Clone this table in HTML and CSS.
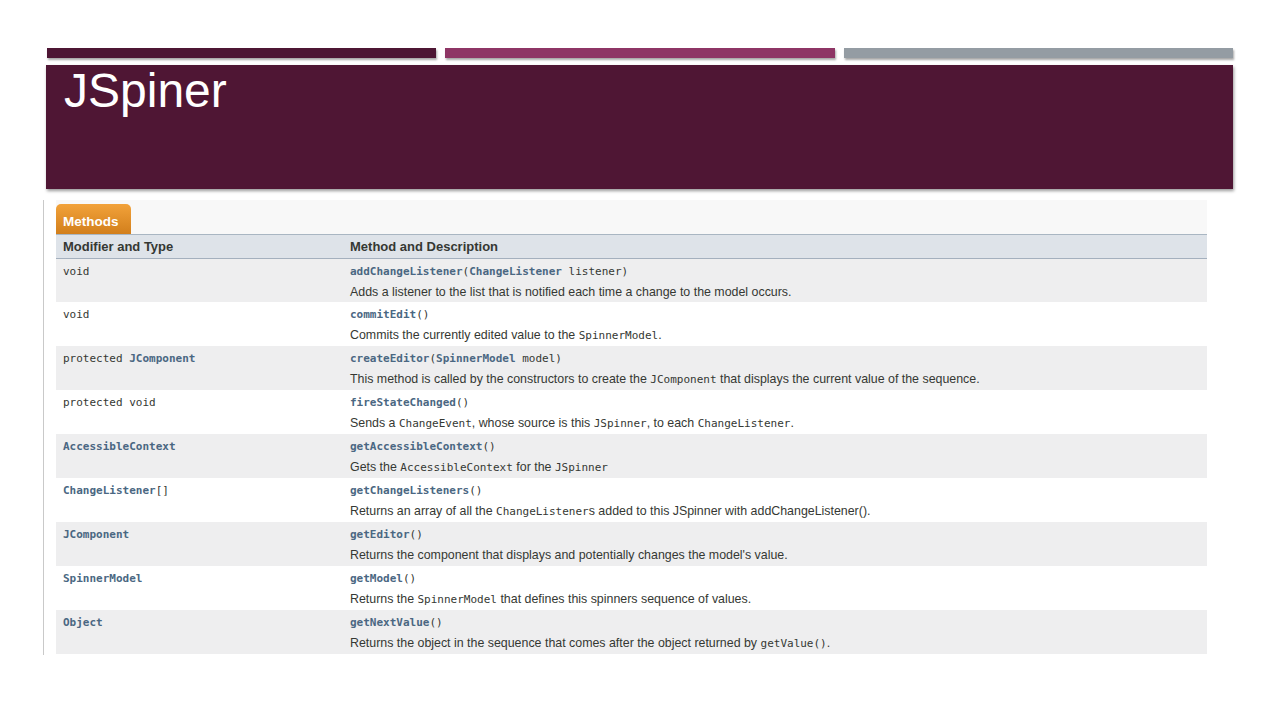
FILE: index.html
```html
<!DOCTYPE html>
<html>
<head>
<meta charset="utf-8">
<link rel="stylesheet" href="styles.css">
</head>
<body>
<div class="slide">
  <div class="bars">
    <div class="bar bar-dark"></div>
    <div class="bar bar-pink"></div>
    <div class="bar bar-gray"></div>
  </div>
  <div class="title-block">
    <h1 class="title">JSpiner</h1>
  </div>
  <div class="doc">
    <div class="tab-area">
      <div class="tab">Methods</div>
    </div>
    <div class="table">
      <div class="row head">
        <div class="cell">Modifier and Type</div>
        <div class="cell">Method and Description</div>
      </div>
      <div class="row alt">
        <div class="cell"><code>void</code></div>
        <div class="cell"><div class="sig"><code class="link">addChangeListener</code><code>(</code><code class="link">ChangeListener</code><code>&nbsp;listener)</code></div><div class="desc">Adds a listener to the list that is notified each time a change to the model occurs.</div></div>
      </div>
      <div class="row">
        <div class="cell"><code>void</code></div>
        <div class="cell"><div class="sig"><code class="link">commitEdit</code><code>()</code></div><div class="desc">Commits the currently edited value to the <code>SpinnerModel</code>.</div></div>
      </div>
      <div class="row alt">
        <div class="cell"><code>protected&nbsp;</code><code class="link">JComponent</code></div>
        <div class="cell"><div class="sig"><code class="link">createEditor</code><code>(</code><code class="link">SpinnerModel</code><code>&nbsp;model)</code></div><div class="desc">This method is called by the constructors to create the <code>JComponent</code> that displays the current value of the sequence.</div></div>
      </div>
      <div class="row">
        <div class="cell"><code>protected void</code></div>
        <div class="cell"><div class="sig"><code class="link">fireStateChanged</code><code>()</code></div><div class="desc">Sends a <code>ChangeEvent</code>, whose source is this <code>JSpinner</code>, to each <code>ChangeListener</code>.</div></div>
      </div>
      <div class="row alt">
        <div class="cell"><code class="link">AccessibleContext</code></div>
        <div class="cell"><div class="sig"><code class="link">getAccessibleContext</code><code>()</code></div><div class="desc">Gets the <code>AccessibleContext</code> for the <code>JSpinner</code></div></div>
      </div>
      <div class="row">
        <div class="cell"><code class="link">ChangeListener</code><code>[]</code></div>
        <div class="cell"><div class="sig"><code class="link">getChangeListeners</code><code>()</code></div><div class="desc">Returns an array of all the <code>ChangeListener</code>s added to this JSpinner with addChangeListener().</div></div>
      </div>
      <div class="row alt">
        <div class="cell"><code class="link">JComponent</code></div>
        <div class="cell"><div class="sig"><code class="link">getEditor</code><code>()</code></div><div class="desc">Returns the component that displays and potentially changes the model's value.</div></div>
      </div>
      <div class="row">
        <div class="cell"><code class="link">SpinnerModel</code></div>
        <div class="cell"><div class="sig"><code class="link">getModel</code><code>()</code></div><div class="desc">Returns the <code>SpinnerModel</code> that defines this spinners sequence of values.</div></div>
      </div>
      <div class="row alt">
        <div class="cell"><code class="link">Object</code></div>
        <div class="cell"><div class="sig"><code class="link">getNextValue</code><code>()</code></div><div class="desc">Returns the object in the sequence that comes after the object returned by <code>getValue()</code>.</div></div>
      </div>
    </div>
  </div>
</div>
</body>
</html>
```
FILE: styles.css
```css
html, body {
  margin: 0;
  padding: 0;
  background: #ffffff;
}
.slide {
  width: 1280px;
  height: 720px;
  padding-top: 48px;
  box-sizing: border-box;
  font-family: "Liberation Sans", Arial, sans-serif;
}
.bars {
  display: flex;
  gap: 9px;
  margin-left: 47px;
  width: 1186px;
}
.bar {
  flex: 1;
  height: 10px;
  box-shadow: 1px 2px 2px rgba(0, 0, 0, 0.35);
}
.bar-dark { background: #4d1634; }
.bar-pink { background: #8e3565; }
.bar-gray { background: #949ca3; }
.title-block {
  margin: 7px 0 0 46px;
  width: 1187px;
  height: 124px;
  background: #4f1634;
  box-shadow: 1px 2px 3px rgba(0, 0, 0, 0.4);
  box-sizing: border-box;
  padding: 2px 0 0 18px;
}
.title {
  margin: 0;
  font-weight: normal;
  font-size: 48px;
  line-height: 48px;
  color: #ffffff;
}
.doc {
  margin: 11px 0 0 43px;
  width: 1164px;
  height: 455px;
  border-left: 1px solid #c9c9c9;
  box-sizing: border-box;
  padding-left: 12px;
  background: linear-gradient(#f8f8f8, #f8f8f8) no-repeat 12px 0 / 100% 34px;
}
.tab-area {
  padding-top: 4px;
  height: 30px;
}
.tab {
  width: 75px;
  height: 30px;
  box-sizing: border-box;
  border-radius: 5px 5px 0 0;
  background: linear-gradient(#f2a23a, #d27f1c);
  color: #ffffff;
  font-weight: bold;
  font-size: 13.5px;
  padding: 10px 0 0 7px;
}
.row {
  display: grid;
  grid-template-columns: 287px 1fr;
  height: 44px;
  box-sizing: border-box;
  padding-top: 2px;
  background: #ffffff;
  color: #353833;
  font-size: 12.4px;
}
.row.alt { background: #eeeeef; }
.row.head {
  height: 25px;
  padding-top: 0;
  background: #dee3e9;
  border-top: 1px solid #a9b6c2;
  border-bottom: 1px solid #a4b0be;
  font-weight: bold;
  font-size: 13px;
  align-items: center;
}
.row.head + .row { height: 43px; }
.cell {
  padding-left: 7px;
  line-height: 21px;
}
code {
  font-family: "DejaVu Sans Mono", "Liberation Mono", monospace;
  font-size: 11px;
  color: #353833;
}
code.link {
  color: #4a6782;
  font-weight: bold;
}
.desc {
  white-space: nowrap;
}
```
